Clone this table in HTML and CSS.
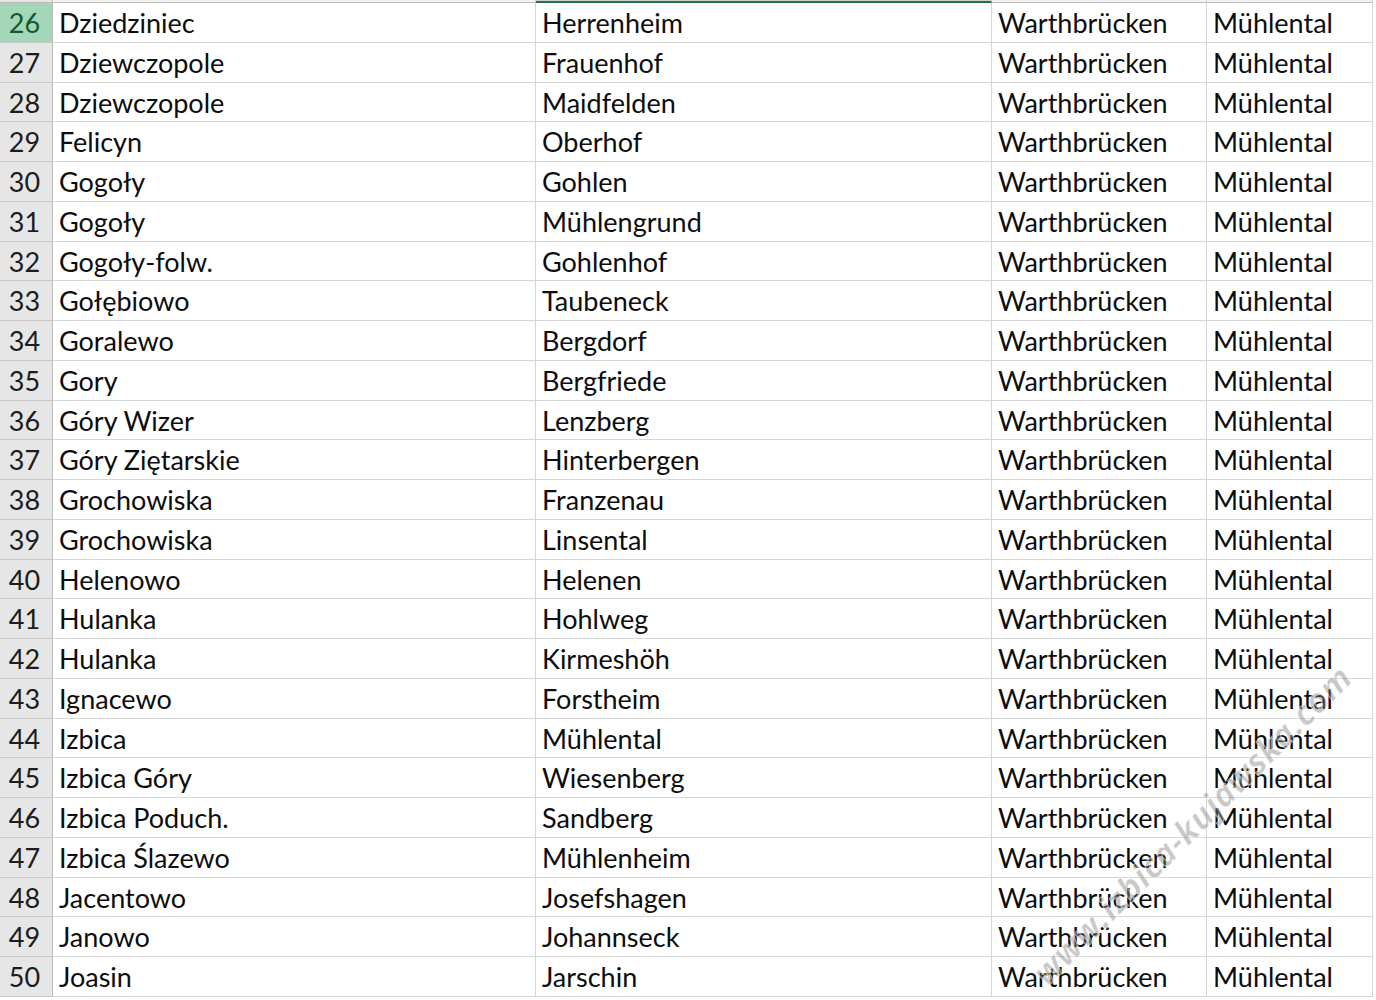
FILE: index.html
```html
<!DOCTYPE html>
<html>
<head>
<meta charset="utf-8">
<link rel="stylesheet" href="styles.css">
</head>
<body>
<div class="sheet">
  <div class="colhead">
    <div class="ch ch-rn"></div>
    <div class="ch"></div>
    <div class="ch ch-active"></div>
    <div class="ch"></div>
    <div class="ch"></div>
  </div>
  <div class="row active"><div class="rn">26</div><div class="c">Dziedziniec</div><div class="c">Herrenheim</div><div class="c">Warthbrücken</div><div class="c">Mühlental</div></div>
  <div class="row"><div class="rn">27</div><div class="c">Dziewczopole</div><div class="c">Frauenhof</div><div class="c">Warthbrücken</div><div class="c">Mühlental</div></div>
  <div class="row"><div class="rn">28</div><div class="c">Dziewczopole</div><div class="c">Maidfelden</div><div class="c">Warthbrücken</div><div class="c">Mühlental</div></div>
  <div class="row"><div class="rn">29</div><div class="c">Felicyn</div><div class="c">Oberhof</div><div class="c">Warthbrücken</div><div class="c">Mühlental</div></div>
  <div class="row"><div class="rn">30</div><div class="c">Gogoły</div><div class="c">Gohlen</div><div class="c">Warthbrücken</div><div class="c">Mühlental</div></div>
  <div class="row"><div class="rn">31</div><div class="c">Gogoły</div><div class="c">Mühlengrund</div><div class="c">Warthbrücken</div><div class="c">Mühlental</div></div>
  <div class="row"><div class="rn">32</div><div class="c">Gogoły-folw.</div><div class="c">Gohlenhof</div><div class="c">Warthbrücken</div><div class="c">Mühlental</div></div>
  <div class="row"><div class="rn">33</div><div class="c">Gołębiowo</div><div class="c">Taubeneck</div><div class="c">Warthbrücken</div><div class="c">Mühlental</div></div>
  <div class="row"><div class="rn">34</div><div class="c">Goralewo</div><div class="c">Bergdorf</div><div class="c">Warthbrücken</div><div class="c">Mühlental</div></div>
  <div class="row"><div class="rn">35</div><div class="c">Gory</div><div class="c">Bergfriede</div><div class="c">Warthbrücken</div><div class="c">Mühlental</div></div>
  <div class="row"><div class="rn">36</div><div class="c">Góry Wizer</div><div class="c">Lenzberg</div><div class="c">Warthbrücken</div><div class="c">Mühlental</div></div>
  <div class="row"><div class="rn">37</div><div class="c">Góry Ziętarskie</div><div class="c">Hinterbergen</div><div class="c">Warthbrücken</div><div class="c">Mühlental</div></div>
  <div class="row"><div class="rn">38</div><div class="c">Grochowiska</div><div class="c">Franzenau</div><div class="c">Warthbrücken</div><div class="c">Mühlental</div></div>
  <div class="row"><div class="rn">39</div><div class="c">Grochowiska</div><div class="c">Linsental</div><div class="c">Warthbrücken</div><div class="c">Mühlental</div></div>
  <div class="row"><div class="rn">40</div><div class="c">Helenowo</div><div class="c">Helenen</div><div class="c">Warthbrücken</div><div class="c">Mühlental</div></div>
  <div class="row"><div class="rn">41</div><div class="c">Hulanka</div><div class="c">Hohlweg</div><div class="c">Warthbrücken</div><div class="c">Mühlental</div></div>
  <div class="row"><div class="rn">42</div><div class="c">Hulanka</div><div class="c">Kirmeshöh</div><div class="c">Warthbrücken</div><div class="c">Mühlental</div></div>
  <div class="row"><div class="rn">43</div><div class="c">Ignacewo</div><div class="c">Forstheim</div><div class="c">Warthbrücken</div><div class="c">Mühlental</div></div>
  <div class="row"><div class="rn">44</div><div class="c">Izbica</div><div class="c">Mühlental</div><div class="c">Warthbrücken</div><div class="c">Mühlental</div></div>
  <div class="row"><div class="rn">45</div><div class="c">Izbica Góry</div><div class="c">Wiesenberg</div><div class="c">Warthbrücken</div><div class="c">Mühlental</div></div>
  <div class="row"><div class="rn">46</div><div class="c">Izbica Poduch.</div><div class="c">Sandberg</div><div class="c">Warthbrücken</div><div class="c">Mühlental</div></div>
  <div class="row"><div class="rn">47</div><div class="c">Izbica Ślazewo</div><div class="c">Mühlenheim</div><div class="c">Warthbrücken</div><div class="c">Mühlental</div></div>
  <div class="row"><div class="rn">48</div><div class="c">Jacentowo</div><div class="c">Josefshagen</div><div class="c">Warthbrücken</div><div class="c">Mühlental</div></div>
  <div class="row"><div class="rn">49</div><div class="c">Janowo</div><div class="c">Johannseck</div><div class="c">Warthbrücken</div><div class="c">Mühlental</div></div>
  <div class="row"><div class="rn">50</div><div class="c">Joasin</div><div class="c">Jarschin</div><div class="c">Warthbrücken</div><div class="c">Mühlental</div></div>
  <div class="watermark">www.izbica-kujawska.com</div>
</div>
</body>
</html>
```
FILE: styles.css
```css
html, body {
  margin: 0;
  padding: 0;
  background: #ffffff;
}
.sheet {
  position: relative;
  width: 1376px;
  height: 1000px;
  overflow: hidden;
  font-family: Lato, "Open Sans", sans-serif;
  color: #0d0d0d;
}
.colhead {
  display: grid;
  grid-template-columns: 53px 483px 456px 215px 166px;
  height: 3px;
}
.ch {
  background: #f2f2f2;
  border-bottom: 1px solid #bcbcbc;
  border-right: 1px solid #d0d0d0;
  box-sizing: border-box;
}
.ch-rn {
  background: #e6e6e6;
  border-right: 1px solid #bcbcbc;
}
.ch-active {
  border-bottom: 2px solid #217346;
  background: #d2d2d2;
}
.row {
  display: grid;
  grid-template-columns: 53px 483px 456px 215px 166px;
  height: 39.76px;
  box-sizing: border-box;
}
.rn, .c {
  box-sizing: border-box;
  border-bottom: 1px solid #d6d6d6;
  border-right: 1px solid #d6d6d6;
  font-size: 27px;
  line-height: 38px;
  padding-top: 1px;
  white-space: nowrap;
  overflow: hidden;
}
.rn {
  background: #e6e6e6;
  border-right: 1px solid #bcbcbc;
  border-bottom: 1px solid #c8c8c8;
  text-align: center;
  color: #1c1c1c;
  padding-right: 3px;
}
.c {
  padding-left: 6px;
}
.row.active .rn {
  background: #a3d7b8;
  color: #0f5a2f;
}
.watermark {
  position: absolute;
  left: 1038px;
  top: 958px;
  font-family: "Open Sans", sans-serif;
  font-weight: 700;
  font-style: italic;
  font-size: 34px;
  line-height: 40px;
  color: rgba(130, 130, 130, 0.45);
  -webkit-text-stroke: 1px rgba(255, 255, 255, 0.6);
  transform: rotate(-45deg);
  transform-origin: left center;
  white-space: nowrap;
  letter-spacing: 0.5px;
}
```
